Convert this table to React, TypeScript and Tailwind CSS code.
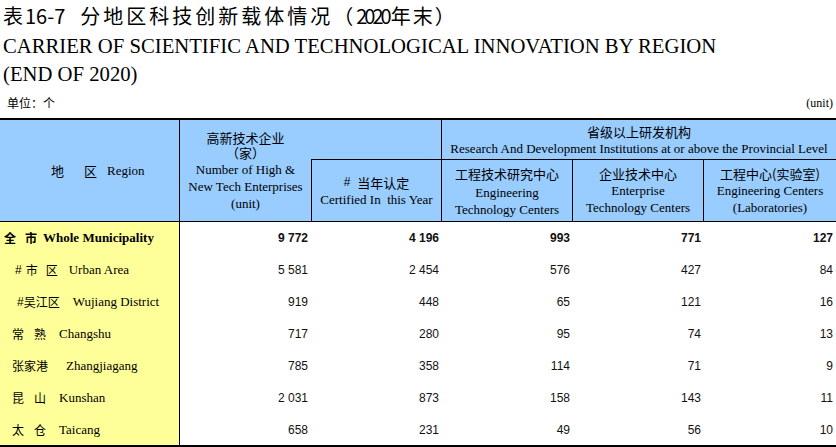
import React from "react";

// font stacks
const CJK = "font-['Noto_Sans_CJK_SC',sans-serif]";
const SERIF = "font-['Liberation_Serif','Noto_Sans_CJK_SC',serif]";
const NUM = "font-['Liberation_Sans',Arial,sans-serif]";

const COLS = "grid grid-cols-[180px_131px_131px_131px_131px_132px]";

type Row = {
  label: React.ReactNode;
  values: string[];
  bold?: boolean;
};

const rows: Row[] = [
  {
    bold: true,
    values: ["9 772", "4 196", "993", "771", "127"],
    label: (
      <div className="flex items-center pl-[4px] font-bold">
        <span className={`${CJK} text-[12px]`}>全</span>
        <span className={`${CJK} text-[12px] ml-[9px]`}>市</span>
        <span className={`${SERIF} text-[13px] ml-[6px]`}>Whole Municipality</span>
      </div>
    ),
  },
  {
    values: ["5 581", "2 454", "576", "427", "84"],
    label: (
      <div className="flex items-center pl-[15px]">
        <span className={`${NUM} text-[12px]`}>#</span>
        <span className={`${CJK} text-[12px] ml-[4px]`}>市</span>
        <span className={`${CJK} text-[12px] ml-[8px]`}>区</span>
        <span className={`${SERIF} text-[13px] ml-[11px]`}>Urban Area</span>
      </div>
    ),
  },
  {
    values: ["919", "448", "65", "121", "16"],
    label: (
      <div className="flex items-center pl-[17px]">
        <span className={`${NUM} text-[12px]`}>#</span>
        <span className={`${CJK} text-[12px]`}>吴江区</span>
        <span className={`${SERIF} text-[13px] ml-[13px]`}>Wujiang District</span>
      </div>
    ),
  },
  {
    values: ["717", "280", "95", "74", "13"],
    label: (
      <div className="flex items-center pl-[12px]">
        <span className={`${CJK} text-[12px]`}>常</span>
        <span className={`${CJK} text-[12px] ml-[10px]`}>熟</span>
        <span className={`${SERIF} text-[13px] ml-[13px]`}>Changshu</span>
      </div>
    ),
  },
  {
    values: ["785", "358", "114", "71", "9"],
    label: (
      <div className="flex items-center pl-[12px]">
        <span className={`${CJK} text-[12px]`}>张家港</span>
        <span className={`${SERIF} text-[13px] ml-[18px]`}>Zhangjiagang</span>
      </div>
    ),
  },
  {
    values: ["2 031", "873", "158", "143", "11"],
    label: (
      <div className="flex items-center pl-[12px]">
        <span className={`${CJK} text-[12px]`}>昆</span>
        <span className={`${CJK} text-[12px] ml-[10px]`}>山</span>
        <span className={`${SERIF} text-[13px] ml-[13px]`}>Kunshan</span>
      </div>
    ),
  },
  {
    values: ["658", "231", "49", "56", "10"],
    label: (
      <div className="flex items-center pl-[12px]">
        <span className={`${CJK} text-[12px]`}>太</span>
        <span className={`${CJK} text-[12px] ml-[10px]`}>仓</span>
        <span className={`${SERIF} text-[13px] ml-[13px]`}>Taicang</span>
      </div>
    ),
  },
];

function Header() {
  return (
    <div className={`${COLS} grid-rows-[40px_62px] bg-[#99ccff] text-black`}>
      {/* region */}
      <div className="row-span-2 border-r border-b border-black flex items-center pl-[51px]">
        <span className={`${CJK} text-[13px]`}>地</span>
        <span className={`${CJK} text-[13px] ml-[20px]`}>区</span>
        <span className={`${SERIF} text-[13px] ml-[10px]`}>Region</span>
      </div>

      {/* high & new tech, spans both header rows */}
      <div className="row-span-2 border-b border-black flex flex-col items-center justify-center pt-[2px] text-center">
        <div className={`${CJK} text-[13px] leading-[14.5px] whitespace-pre-line`}>{"高新技术企业\n（家）"}</div>
        <div className={`${SERIF} text-[13px] leading-[17px] mt-[1px]`}>Number of High &amp;</div>
        <div className={`${SERIF} text-[13px] leading-[17px]`}>New Tech Enterprises</div>
        <div className={`${SERIF} text-[13px] leading-[17px]`}>(unit)</div>
      </div>

      {/* empty top of certified column */}
      <div className="border-b border-r border-black" />

      {/* R&D span */}
      <div className="col-span-3 border-b border-black flex flex-col items-center justify-center text-center">
        <div className={`${CJK} text-[13px] leading-[17px]`}>省级以上研发机构</div>
        <div className={`${SERIF} text-[13px] leading-[17px] whitespace-nowrap`}>
          Research And Development Institutions at or above the Provincial Level
        </div>
      </div>

      {/* certified this year */}
      <div className="border-l border-r border-b border-black flex flex-col items-center justify-center text-center">
        <div className="leading-[17px] flex items-center">
          <span className={`${NUM} text-[12px]`}>#</span>
          <span className={`${CJK} text-[13px] ml-[7px]`}>当年认定</span>
        </div>
        <div className={`${SERIF} text-[13px] leading-[17px] whitespace-pre`}>Certified In  this Year</div>
      </div>

      <div className="border-r border-b border-black flex flex-col items-center justify-center text-center">
        <div className={`${CJK} text-[13px] leading-[20px]`}>工程技术研究中心</div>
        <div className={`${SERIF} text-[13px] leading-[17px]`}>Engineering</div>
        <div className={`${SERIF} text-[13px] leading-[17px]`}>Technology Centers</div>
      </div>

      <div className="border-r border-b border-black flex flex-col items-center justify-center text-center">
        <div className={`${CJK} text-[13px] leading-[16px]`}>企业技术中心</div>
        <div className={`${SERIF} text-[13px] leading-[17px]`}>Enterprise</div>
        <div className={`${SERIF} text-[13px] leading-[17px]`}>Technology Centers</div>
      </div>

      <div className="border-b border-black flex flex-col items-center justify-center text-center">
        <div className={`${CJK} text-[13px] leading-[16px]`}>工程中心(实验室)</div>
        <div className={`${SERIF} text-[13px] leading-[17px]`}>Engineering Centers</div>
        <div className={`${SERIF} text-[13px] leading-[17px]`}>(Laboratories)</div>
      </div>
    </div>
  );
}

export default function App() {
  return (
    <div className="w-[836px] h-[447px] bg-white text-black overflow-hidden">
      {/* titles */}
      <div className={`${CJK} text-[20px] leading-[32px] h-[32px] pl-[3px] flex items-baseline whitespace-nowrap`}>
        <span>表</span>
        <span className="ml-[2px]">16-7</span>
        <span className="ml-[15px] tracking-[3px]">分地区科技创新载体情况（</span>
        <span className="tracking-[-3px]">2020</span>
        <span className="ml-[2px] tracking-[2px]">年末）</span>
      </div>
      <div className={`${SERIF} text-[20.7px] leading-[28px] pl-[3px] whitespace-nowrap`}>
        CARRIER OF SCIENTIFIC AND TECHNOLOGICAL INNOVATION BY REGION
      </div>
      <div className={`${SERIF} text-[20.7px] leading-[28px] pl-[3px]`}>(END OF 2020)</div>

      <div className="flex items-center justify-between h-[30px] pl-[7px] pr-[3px]">
        <span className={`${CJK} text-[12px]`}>单位：个</span>
        <span className={`${SERIF} text-[12px]`}>(unit)</span>
      </div>

      {/* table */}
      <div className="border-t-2 border-b-2 border-black">
        <Header />
        {rows.map((r, i) => (
          <div
            key={i}
            className={`${COLS} ${i === rows.length - 1 ? "h-[31px]" : "h-[32px]"}`}
          >
            <div className="bg-[#ffff99] border-r border-black flex items-center">{r.label}</div>
            {r.values.map((v, j) => (
              <div
                key={j}
                className={`${NUM} text-[12px] flex items-center justify-end pr-[3px] text-[#111] ${
                  r.bold ? "font-bold" : ""
                }`}
              >
                {v}
              </div>
            ))}
          </div>
        ))}
      </div>
    </div>
  );
}
